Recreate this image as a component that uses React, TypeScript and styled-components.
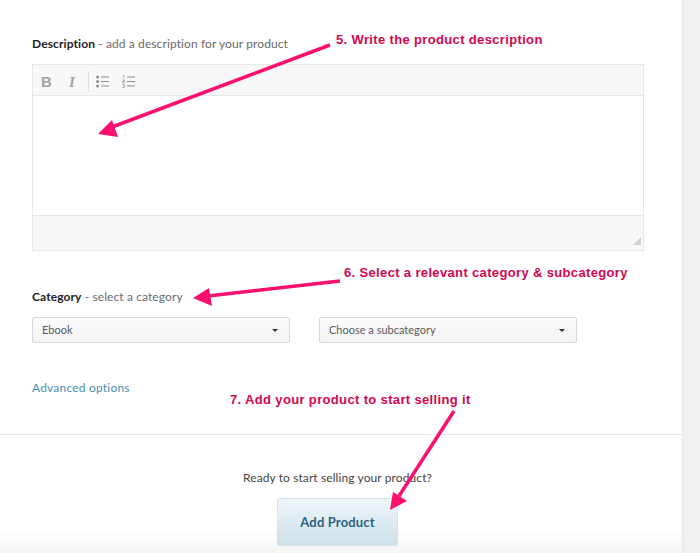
import * as React from 'react';

import styled, { createGlobalStyle } from 'styled-components';

const GlobalStyle = createGlobalStyle`
  html, body {
    margin: 0;
    padding: 0;
    background: #fff;
  }
  body {
    font-family: 'Lato', 'Liberation Sans', sans-serif;
  }
`;

const Page = styled.div`
  position: relative;
  display: flex;
  width: 700px;
  height: 553px;
  overflow: hidden;
`;

const Main = styled.main`
  width: 682px;
  display: flex;
  flex-direction: column;
  border-right: 1px solid #e6e6e6;
`;

const Gutter = styled.div`
  flex: 1;
  background: #f1f1f1;
`;

const Form = styled.div`
  height: 434px;
  box-sizing: border-box;
  padding: 36px 38px 0 32px;
`;

const Label = styled.div`
  font-size: 12px;
  line-height: 15px;
  color: #6a6a6a;
  letter-spacing: 0.1px;

  strong {
    font-weight: 700;
    color: #222;
  }
`;

const Editor = styled.div`
  margin-top: 13px;
  width: 612px;
  box-sizing: border-box;
  border: 1px solid #e7e7e7;
`;

const Toolbar = styled.div`
  height: 31px;
  box-sizing: border-box;
  display: flex;
  align-items: center;
  padding: 3px 0 0 8px;
  background: #f8f8f8;
  border-bottom: 1px solid #e7e7e7;
  color: #a2a2a2;
`;

const ToolButton = styled.span<{ $italic?: boolean }>`
  width: 26px;
  font-family: ${({ $italic }) =>
    $italic ? "'Liberation Serif', serif" : "'Liberation Sans', sans-serif"};
  font-size: 15px;
  font-weight: 700;
  font-style: ${({ $italic }) => ($italic ? 'italic' : 'normal')};
  line-height: 26px;
  padding-left: ${({ $italic }) => ($italic ? '2px' : '0')};
`;

const ToolDivider = styled.span`
  width: 1px;
  height: 21px;
  margin: 0 7px 0 -7px;
  background: #e2e2e2;
`;

const ToolIcon = styled.svg`
  width: 13px;
  height: 13px;
  margin-right: 13px;
  color: #8c8c8c;
`;

const EditorBody = styled.div`
  height: 119px;
  background: #fff;
  border-bottom: 1px solid #e7e7e7;
`;

const EditorFooter = styled.div`
  position: relative;
  height: 34px;
  background: #f8f8f8;
`;

const ResizeGrip = styled.svg`
  position: absolute;
  right: 2px;
  bottom: 5px;
  width: 8px;
  height: 8px;
`;

const CategorySection = styled.div`
  margin-top: 38px;
`;

const SelectRow = styled.div`
  display: flex;
  gap: 29px;
  margin-top: 13px;
`;

const Select = styled.div<{ $width: number }>`
  width: ${({ $width }) => $width}px;
  height: 26px;
  box-sizing: border-box;
  display: flex;
  align-items: center;
  justify-content: space-between;
  padding: 0 11px 1px 9px;
  border: 1px solid #d9d9d9;
  border-radius: 2px;
  background: linear-gradient(#fbfbfb, #f3f3f3);
  font-size: 11px;
  color: #5b5b5b;
`;

const Caret = styled.span`
  width: 0;
  height: 0;
  margin-top: 2px;
  border-left: 3px solid transparent;
  border-right: 3px solid transparent;
  border-top: 3px solid #333;
`;

const AdvancedLink = styled.a`
  display: block;
  margin-top: 37px;
  font-size: 12px;
  line-height: 15px;
  letter-spacing: 0.2px;
  color: #4b8db0;
`;

const Footer = styled.div`
  flex: 1;
  display: flex;
  flex-direction: column;
  align-items: center;
  padding-right: 7px;
  border-top: 1px solid #e6e6e6;
  background: linear-gradient(#fff 80%, #f5f5f5 100%);
`;

const ReadyText = styled.div`
  margin-top: 35px;
  font-size: 12px;
  line-height: 15px;
  letter-spacing: 0.1px;
  color: #444;
`;

const AddButton = styled.button`
  width: 121px;
  height: 48px;
  margin-top: 13px;
  padding: 0;
  border: 1px solid #d3e4ec;
  border-radius: 3px;
  background: linear-gradient(#eef6fa, #cfe0e9);
  font-family: inherit;
  font-size: 13px;
  font-weight: 700;
  letter-spacing: 0.15px;
  color: #2b6481;
`;

const Annotation = styled.div<{ $x: number; $y: number }>`
  position: absolute;
  left: ${({ $x }) => $x}px;
  top: ${({ $y }) => $y}px;
  font-family: 'Liberation Sans', Arial, sans-serif;
  font-size: 13px;
  font-weight: 700;
  line-height: 16px;
  letter-spacing: 0.35px;
  white-space: nowrap;
  color: #d4064f;
`;

const ArrowLayer = styled.svg`
  position: absolute;
  left: 0;
  top: 0;
  width: 700px;
  height: 553px;
  pointer-events: none;
`;

const BulletIcon = () => (
  <ToolIcon viewBox="0 0 13 13">
    <g fill="currentColor">
      <circle cx="1.6" cy="2" r="1.5" />
      <circle cx="1.6" cy="6.5" r="1.5" />
      <circle cx="1.6" cy="11" r="1.5" />
    </g>
    <path stroke="currentColor" strokeWidth="1" d="M5 2h8M5 6.5h8M5 11h8" />
  </ToolIcon>
);

const NumberIcon = () => (
  <ToolIcon viewBox="0 0 13 13">
    <g stroke="currentColor" fill="none">
      <path strokeWidth="0.7" d="M1 0.4h1v3M0.4 5h2v1.6h-1.8v1.2h2M0.4 9.6h2v3h-2M1 11h1.4" />
      <path strokeWidth="1" d="M5 2h8M5 6.5h8M5 11h8" />
    </g>
  </ToolIcon>
);

const App: React.FC = () => (
  <>
    <GlobalStyle />
    <Page>
      <Main>
        <Form>
          <Label>
            <strong>Description</strong> - add a description for your product
          </Label>
          <Editor>
            <Toolbar>
              <ToolButton>B</ToolButton>
              <ToolButton $italic>I</ToolButton>
              <ToolDivider />
              <BulletIcon />
              <NumberIcon />
            </Toolbar>
            <EditorBody />
            <EditorFooter>
              <ResizeGrip viewBox="0 0 8 8">
                <path d="M8 0V8H0Z" fill="#cfcfcf" />
              </ResizeGrip>
            </EditorFooter>
          </Editor>
          <CategorySection>
            <Label>
              <strong>Category</strong> - select a category
            </Label>
            <SelectRow>
              <Select $width={258}>
                Ebook
                <Caret />
              </Select>
              <Select $width={258}>
                Choose a subcategory
                <Caret />
              </Select>
            </SelectRow>
          </CategorySection>
          <AdvancedLink>Advanced options</AdvancedLink>
        </Form>
        <Footer>
          <ReadyText>Ready to start selling your product?</ReadyText>
          <AddButton>Add Product</AddButton>
        </Footer>
      </Main>
      <Gutter />

      <Annotation $x={336} $y={32}>5. Write the product description</Annotation>
      <Annotation $x={344} $y={265}>6. Select a relevant category &amp; subcategory</Annotation>
      <Annotation $x={230} $y={392}>7. Add your product to start selling it</Annotation>

      <ArrowLayer viewBox="0 0 700 553">
        <g stroke="#fb0f6f" strokeWidth="3.5" fill="none">
          <path d="M330 45L112 127" />
          <path d="M340 281L208 296" />
          <path d="M454 411L399 496" />
        </g>
        <g fill="#fb0f6f">
          <path d="M98 134L112 120L118 137Z" />
          <path d="M193 298L209 288L212 306Z" />
          <path d="M390 510L393 492L407 501Z" />
        </g>
      </ArrowLayer>
    </Page>
  </>
);

export default App;
